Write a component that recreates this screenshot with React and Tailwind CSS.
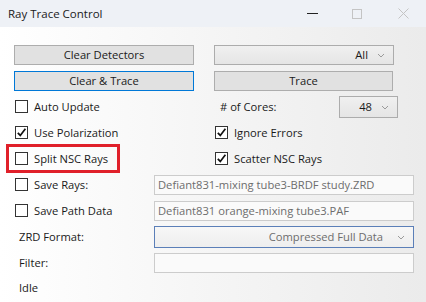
import React from "react";

const font = { fontFamily: '"Open Sans", "Noto Sans", sans-serif' };

function Check({ checked }) {
  return (
    <span className="flex h-[13px] w-[13px] shrink-0 items-center justify-center border border-[#333333] bg-white">
      {checked && (
        <svg width="11" height="11" viewBox="0 0 11 11">
          <path d="M1.8 5.8 L4.3 8.4 L9.4 1.8" fill="none" stroke="#111" strokeWidth="1.7" />
        </svg>
      )}
    </span>
  );
}

function CheckRow({ checked, label }) {
  return (
    <div className="flex items-center gap-[6px]">
      <Check checked={checked} />
      <span className="text-[#1a1a1a]">{label}</span>
    </div>
  );
}

function Chevron() {
  return (
    <svg width="8" height="5" viewBox="0 0 8 5" className="shrink-0">
      <path d="M1 1 L4 4 L7 1" fill="none" stroke="#9a9a9a" strokeWidth="1" />
    </svg>
  );
}

function TextBox({ value }) {
  return (
    <div className="flex h-[20px] w-[260px] items-center overflow-hidden whitespace-nowrap border border-[#cccccc] bg-[#fafafa] pl-[3px] text-[#6d6d6d]">
      {value}
    </div>
  );
}

export default function App() {
  return (
    <div className="h-[302px] w-[426px] overflow-hidden bg-linear-to-r from-white to-[#ebebeb] text-[11.2px]" style={font}>
      <div className="flex h-[27px] items-center bg-[#eef1f6] pl-[8px] text-[11.5px] text-[#1a1a1a]">
        <span className="flex-1">Ray Trace Control</span>
        <div className="flex items-center">
          <div className="flex w-[44px] justify-center">
            <span className="block h-px w-[11px] bg-[#222]" />
          </div>
          <div className="flex w-[46px] justify-center">
            <span className="block h-[10px] w-[10px] border border-[#c4c4c4]" />
          </div>
          <div className="flex w-[46px] justify-center">
            <svg width="11" height="11" viewBox="0 0 11 11">
              <path d="M0.5 0.5 L10.5 10.5 M10.5 0.5 L0.5 10.5" stroke="#c4c4c4" strokeWidth="1" />
            </svg>
          </div>
        </div>
      </div>

      <div className="flex flex-col pl-[14px] pt-[18px] text-[#1a1a1a]">
        <div className="flex h-[20px] gap-[20px]">
          <div className="flex w-[180px] items-center justify-center border border-[#adadad] bg-[#e1e1e1]">Clear Detectors</div>
          <div className="flex w-[180px] items-center justify-end gap-[9px] border border-[#acacac] bg-linear-to-b from-[#f0f0f0] to-[#e5e5e5] pr-[8px]">
            <span>All</span>
            <Chevron />
          </div>
        </div>

        <div className="mt-[6px] flex h-[20px] gap-[20px]">
          <div className="flex w-[180px] items-center justify-center border border-[#0078d7] bg-[#e1e1e1]">Clear &amp; Trace</div>
          <div className="flex w-[179px] items-center justify-center border border-[#adadad] bg-[#e1e1e1]">Trace</div>
        </div>

        <div className="mt-[5px] flex h-[22px] items-center">
          <div className="w-[200px] pl-px">
            <CheckRow label="Auto Update" />
          </div>
          <span className="w-[125px] pl-[6px]">&#35; of Cores:</span>
          <div className="flex h-[22px] w-[59px] items-center justify-end gap-[9px] border border-[#acacac] bg-linear-to-b from-[#f0f0f0] to-[#e5e5e5] pr-[8px]">
            <span>48</span>
            <Chevron />
          </div>
        </div>

        <div className="mt-[4px] flex h-[22px] items-center">
          <div className="w-[201px] pl-px">
            <CheckRow checked label="Use Polarization" />
          </div>
          <CheckRow checked label="Ignore Errors" />
        </div>

        <div className="mt-[4px] flex h-[22px] items-center">
          <div className="relative w-[201px] pl-px">
            <CheckRow label="Split NSC Rays" />
            <span className="pointer-events-none absolute left-[-8px] top-[-7px] h-[29px] w-[114px] border-[3px] border-[#e0202a]" />
          </div>
          <CheckRow checked label="Scatter NSC Rays" />
        </div>

        <div className="mt-[4px] flex h-[22px] items-center">
          <div className="w-[140px] pl-px">
            <CheckRow label="Save Rays:" />
          </div>
          <TextBox value="Defiant831-mixing tube3-BRDF study.ZRD" />
        </div>

        <div className="mt-[4px] flex h-[22px] items-center">
          <div className="w-[140px] pl-px">
            <CheckRow label="Save Path Data" />
          </div>
          <TextBox value="Defiant831 orange-mixing tube3.PAF" />
        </div>

        <div className="mt-[4px] flex h-[22px] items-center">
          <span className="w-[140px] pl-[5px]">ZRD Format:</span>
          <div className="flex h-[22px] w-[260px] items-center justify-end gap-[14px] border border-[#5b7fb8] bg-linear-to-b from-[#f7f7f7] to-[#eeeeee] pr-[8px] text-[#6d6d6d]">
            <span>Compressed Full Data</span>
            <Chevron />
          </div>
        </div>

        <div className="mt-[4px] flex h-[22px] items-center">
          <span className="w-[140px] pl-[5px]">Filter:</span>
          <TextBox value="" />
        </div>

        <div className="mt-[4px] flex h-[20px] items-center">
          <span className="pl-[5px]">Idle</span>
        </div>
      </div>
    </div>
  );
}
